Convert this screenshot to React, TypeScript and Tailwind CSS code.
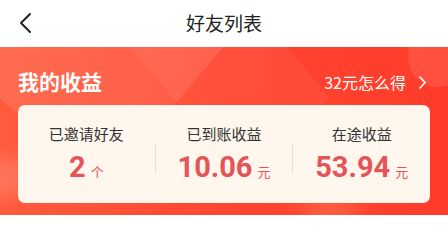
import React from 'react';

const stats = [
  { label: '已邀请好友', value: '2', unit: '个' },
  { label: '已到账收益', value: '10.06', unit: '元' },
  { label: '在途收益', value: '53.94', unit: '元' },
];

export default function App() {
  return (
    <div className="w-[448px] h-[240px] bg-white overflow-hidden" style={{ fontFamily: '"Noto Sans CJK SC", "Noto Sans", sans-serif' }}>
      {/* Header */}
      <div className="h-[47px] flex items-center relative">
        <svg className="absolute left-[16px] top-[12px]" width="18" height="22" viewBox="0 0 18 22" fill="none">
          <path d="M14 2 L5 11 L14 20" stroke="#222" strokeWidth="2" strokeLinecap="round" strokeLinejoin="round" />
        </svg>
        <div className="flex-1 text-center text-[19px] text-[#222]">好友列表</div>
      </div>

      {/* Earnings */}
      <div className="relative h-[168px] overflow-hidden bg-gradient-to-r from-[#ff5b3c] via-[#ff4630] to-[#ff3b2a] px-[18px]">
        <div className="absolute -left-[60px] -top-[120px] w-[260px] h-[200px] bg-white/10 rotate-[40deg]" />
        <div className="absolute left-[140px] -top-[140px] w-[120px] h-[260px] bg-white/5 rotate-[-40deg]" />
        <div className="absolute right-[-20px] -top-[20px] w-[60px] h-[60px] rounded-full bg-white/10" />
        <div className="absolute -left-[20px] top-[110px] w-[50px] h-[40px] rounded-full bg-white/15 blur-sm" />
        <div className="absolute left-[300px] top-[150px] w-[60px] h-[30px] rounded-full bg-[#ff7a50]/60 blur-md" />
        <div className="relative flex items-center justify-between h-[58px] pt-[12px]">
          <span className="text-white text-[21px] font-bold">我的收益</span>
          <span className="flex items-center gap-[12px] pr-[3px] text-white text-[16px]">
            32元怎么得
            <svg width="9" height="15" viewBox="0 0 9 15" fill="none">
              <path d="M2 2 L7 7.5 L2 13" stroke="#fff" strokeWidth="1.6" strokeLinecap="round" strokeLinejoin="round" />
            </svg>
          </span>
        </div>
        <div className="relative h-[98px] rounded-[7px] bg-[#fff6ee] flex items-center">
          {stats.map((s, i) => (
            <React.Fragment key={s.label}>
              {i > 0 && <div className="w-px h-[30px] bg-[#e8ddd4] mt-[8px]" />}
              <div className="flex-1 flex flex-col items-center">
                <span className="text-[15px] text-[#333] leading-[22px]">{s.label}</span>
                <span className="flex items-baseline gap-[5px] mt-[4px]">
                  <span className="text-[29px] font-bold text-[#e55557] leading-[36px]" style={{ fontFamily: '"Roboto", "Noto Sans", sans-serif' }}>{s.value}</span>
                  <span className="text-[13px] text-[#e55557]">{s.unit}</span>
                </span>
              </div>
            </React.Fragment>
          ))}
        </div>
      </div>
    </div>
  );
}
